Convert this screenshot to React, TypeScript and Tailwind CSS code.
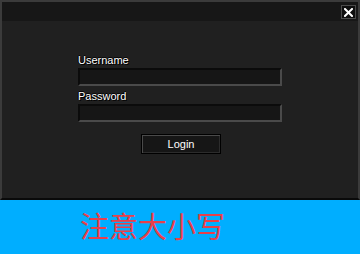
import React from 'react';

function Field({ label }: { label: string }) {
  return (
    <div className="flex flex-col">
      <span className="text-[11px] leading-[13px] text-white [text-shadow:1px_1px_0_#000,-1px_0_0_#000,0_-1px_0_#000]">
        {label}
      </span>
      <input
        className="mt-[1px] h-[18px] w-[204px] border-2 border-t-[#0b0b0b] border-l-[#0b0b0b] border-b-[#4a4a4a] border-r-[#4a4a4a] bg-[#161616] px-1 text-[11px] text-white outline-none"
        type={label === 'Password' ? 'password' : 'text'}
      />
    </div>
  );
}

export default function App() {
  return (
    <div className="flex h-[254px] w-[360px] flex-col font-['Liberation_Sans',sans-serif]">
      {/* window */}
      <div className="flex h-[200px] flex-col border-x-2 border-t-2 border-b-2 border-[#3b3b3b] border-b-[#0a0a0a] bg-[#202020]">
        <div className="flex h-[19px] items-start justify-end bg-[#171717] pr-[2px] pt-[3px]">
          <button className="flex h-[14px] w-[15px] items-center justify-center border border-[#4a4a4a] bg-[#0e0e0e]">
            <svg width="9" height="9" viewBox="0 0 9 9">
              <path d="M1 1 L8 8 M8 1 L1 8" stroke="#fff" strokeWidth="2" strokeLinecap="square" />
            </svg>
          </button>
        </div>
        <div className="flex flex-col pl-[76px] pt-[33px]">
          <div className="flex flex-col gap-[4px]">
            <Field label="Username" />
            <Field label="Password" />
          </div>
          <div className="ml-[63px] mt-[12px]">
            <button className="flex h-[20px] w-[80px] items-center justify-center border border-black bg-[#161616] text-[11px] text-white shadow-[inset_1px_1px_0_#4a4a4a,inset_-1px_-1px_0_#2c2c2c]">
              Login
            </button>
          </div>
        </div>
      </div>
      {/* hint */}
      <div className="flex-1 bg-[#00aeff] pl-[80px] pt-[5px]">
        <span className="font-['Noto_Sans_CJK_SC',sans-serif] text-[29px] leading-[40px] text-[#e8404a]">
          注意大小写
        </span>
      </div>
    </div>
  );
}
